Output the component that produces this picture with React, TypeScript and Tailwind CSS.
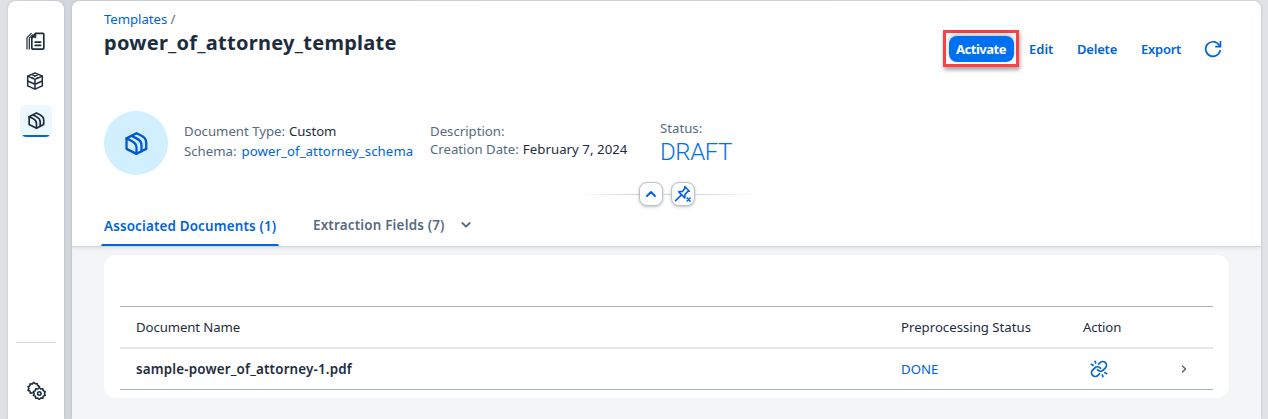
import type { ReactNode, SVGProps } from "react";

function Icon({ children, ...props }: SVGProps<SVGSVGElement> & { children: ReactNode }) {
  return (
    <svg
      width="18"
      height="18"
      viewBox="0 0 18 18"
      fill="none"
      stroke="currentColor"
      strokeWidth="1.5"
      strokeLinecap="round"
      strokeLinejoin="round"
      {...props}
    >
      {children}
    </svg>
  );
}

function DocumentsIcon() {
  return (
    <Icon width="19" height="19" viewBox="0 0 19 19" strokeWidth="1.7">
      <path d="M9.7 1.3h7.2a.9.9 0 0 1 .9.9v14a.9.9 0 0 1-.9.9H6.700a.9.9 0 0 1-.9-.9V5.500z" />
      <path d="M9.9 1.300v4.300H5.800z" fill="currentColor" strokeWidth="0.7" />
      <path d="M9.200 10.200h5.400M9.200 13.300h5.400" />
      <path d="M1 17.500V5.700l4.600-4.600M3.300 17.500V6.200l3.800-3.900" strokeWidth="1.2" strokeLinecap="butt" />
    </Icon>
  );
}

function CubeIcon() {
  return (
    <Icon strokeWidth="1.5">
      <path d="M9 .9l7.3 3.2v9.8L9 17.1l-7.3-3.2V4.1z" />
      <path d="M1.7 4.1L9 7.4l7.3-3.3M9 7.4v9.7M1.7 9L9 12.3 16.3 9" />
      <path d="M5.3 2.6L12.7 5.8M12.7 2.6L5.3 5.8" strokeWidth="1.1" />
    </Icon>
  );
}

function PackageIcon({ size = 18 }: { size?: number }) {
  return (
    <Icon width={size} height={size} strokeWidth="1.8">
      <path d="M1.2 5L9 1l3.600 1.800c2.600 1.300 4 3 4 5.400v5L9 17.100l-7.800-3.900z" />
      <path d="M1.200 5l4 2C7.700 8.300 9 9.800 9 12.200v4.900" />
      <path d="M5 3l4 2c2.600 1.300 3.900 2.900 3.900 5.300v4.800" />
    </Icon>
  );
}

function GearsIcon() {
  return (
    <Icon width="19" height="19" viewBox="0 0 19 19" strokeWidth="1.6">
      <path d="M5.200 11.900l-1.900.3-.3-1.900L1 9.200l1-1.700-1-1.900 1.900-.9.300-1.900 2.100.3L6.700 1.300l1.500 1.500 2-.2.400 1.900 1.800 1" />
      <path d="M12.300 6.500l1.500 1.500 2-.3.500 2 1.900.9-.8 1.900.8 1.900-1.900.9-.5 2-2-.3-1.500 1.500-1.500-1.500-2 .3-.5-2-1.900-.9.800-1.900-.8-1.900 1.900-.9.500-2 2 .3z" />
      <circle cx="12.300" cy="12.500" r="1.700" />
    </Icon>
  );
}

function RefreshIcon() {
  return (
    <Icon className="-ml-px" strokeWidth="1.7" strokeLinecap="butt" strokeLinejoin="miter">
      <path d="M16.200 10.200A7.300 7.300 0 1 1 15.200 5.200l1 1.400" />
      <path d="M16.500 1v5.700h-5.300" />
    </Icon>
  );
}

function UnlinkIcon() {
  return (
    <Icon viewBox="0 0 24 24" strokeWidth="2.3">
      <path d="M10 13a5 5 0 0 0 7.540.540l3-3a5 5 0 0 0-7.070-7.070l-2.200 2.200" />
      <path d="M14 11a5 5 0 0 0-7.540-.540l-3 3a5 5 0 0 0 7.070 7.070l2.200-2.200" />
      <path d="M6.800 1.800l.7 2M1.800 5.800l2.300 1.300M17.200 22.200l-.7-2M22.200 18.200l-2.300-1.300" />
    </Icon>
  );
}

function UnpinIcon() {
  return (
    <Icon strokeWidth="1.6">
      <path d="M10.700 1.500l4.700 4.700-1.700.3-2.600 2.900-.3 3.500-6.200-6 3.800-.5 2.400-3z" />
      <path d="M7.300 10.200L1.600 15.700" />
      <path d="M13.100 13l3 3M16.100 13l-3 3" />
    </Icon>
  );
}

function Sidebar() {
  return (
    <aside className="mt-px flex h-[418px] w-14 shrink-0 flex-col items-center rounded-t-lg bg-white text-[#1d2d3e] shadow-[0_0_3px_rgba(34,53,72,0.18)]">
      <nav className="flex flex-col items-center gap-2 pt-6">
        <div className="flex h-8 w-8 items-center justify-center pr-px"><DocumentsIcon /></div>
        <div className="flex h-8 w-8 items-center justify-center pr-0.5"><CubeIcon /></div>
        <div className="flex h-8 w-8 flex-col items-center overflow-hidden rounded-md bg-[#ebf8ff]">
          <div className="flex h-[30px] items-center pt-px"><PackageIcon size={17} /></div>
          <div className="h-0.5 w-7 rounded-t bg-[#0064d9]" />
        </div>
      </nav>
      <div className="mt-auto h-px w-10 bg-[#d2d4d6]" />
      <div className="flex h-[76px] items-center pt-[18px]"><GearsIcon /></div>
    </aside>
  );
}

function Toolbar() {
  return (
    <div className="mt-[29px] flex h-[37px] items-center text-[13px] leading-5 font-semibold text-[#0064d9]">
      <div className="flex h-[37px] w-[76px] items-center justify-center border-[3px] border-[#fa4146] bg-white shadow-[1px_3px_4px_rgba(0,0,0,0.35)]">
        <button className="flex h-[26px] w-[65px] items-center justify-center rounded-lg bg-[#0070f2] font-bold tracking-[-0.48px] text-white shadow-[0_-2px_4px_rgba(0,0,0,0.25)]">
          Activate
        </button>
      </div>
      <button className="ml-[10px] w-12 text-left">Edit</button>
      <button className="w-16 text-left tracking-[-0.2px]">Delete</button>
      <button className="w-16 text-left tracking-[-0.25px]">Export</button>
      <RefreshIcon />
    </div>
  );
}

function Field({ label, children }: { label: string; children?: ReactNode }) {
  return (
    <div className="flex gap-1 whitespace-nowrap">
      <span className="text-[#556b82]">{label}</span>
      {children}
    </div>
  );
}

function Summary() {
  return (
    <section className="flex h-16 text-[13.2px] leading-5 text-[#1d2d3e]">
      <div className="flex h-16 w-16 items-center justify-center rounded-full bg-[#d1efff] text-[#0057d2]">
        <PackageIcon size={23} />
      </div>
      <div className="ml-4 w-[246px] pt-2.5">
        <Field label="Document Type:"><span className="tracking-[-0.1px]">Custom</span></Field>
        <Field label="Schema:"><a className="pl-px tracking-[0.1px] text-[#0064d9]">power_of_attorney_schema</a></Field>
      </div>
      <div className="w-[230px] pt-[11px] leading-[18px]">
        <Field label="Description:" />
        <Field label="Creation Date:"><span className="tracking-[0.06px]">February 7, 2024</span></Field>
      </div>
      <div className="pt-[9px] leading-4">
        <Field label="Status:" />
        <div className="font-['Roboto',sans-serif] text-2xl leading-8 font-light tracking-[-0.4px] text-[#0070f2]">DRAFT</div>
      </div>
    </section>
  );
}

function HeaderControls() {
  const button =
    "flex h-6 w-6 items-center justify-center rounded-lg border border-[#bcc3ca] bg-white text-[#0064d9] shadow-[0_1px_3px_rgba(34,53,72,0.3)]";
  return (
    <div className="mt-[7px] flex h-6 items-center justify-center">
      <div className="h-px w-[60px] bg-linear-to-r from-transparent to-[#d0d3d6]" />
      <button className={button}>
        <Icon width="12" height="12" viewBox="0 0 12 12" strokeWidth="1.9"><path d="M2 8l4-4 4 4" /></Icon>
      </button>
      <div className="h-px w-2 bg-[#d0d3d6]" />
      <button className={button}><UnpinIcon /></button>
      <div className="h-px w-[60px] bg-linear-to-l from-transparent to-[#d0d3d6]" />
    </div>
  );
}

function Tabs() {
  return (
    <div className="flex h-10 text-[13.4px] font-semibold">
      <div className="-ml-[3px] flex h-10 w-[178px] flex-col text-[#0064d9]">
        <span className="grow pt-[10px] pl-[3px] leading-5 whitespace-nowrap tracking-[0.16px]">Associated Documents (1)</span>
        <div className="h-0.5 rounded-t bg-[#0064d9]" />
      </div>
      <span className="ml-[34px] w-[132px] pt-[9px] leading-5 tracking-[0.2px] whitespace-nowrap text-[#556b82]">Extraction Fields (7)</span>
      <Icon className="mt-[13px] ml-[15px] text-[#556b82]" width="12" height="12" viewBox="0 0 12 12" strokeWidth="1.8">
        <path d="M2.3 4l3.700 3.700L9.700 4" />
      </Icon>
    </div>
  );
}

function DocumentsTable() {
  const row = "grid grid-cols-[765px_181px_85px_1fr] items-center pl-4";
  return (
    <section className="mx-8 mt-2 h-[143px] w-[1125px] rounded-xl bg-white px-4 pt-[51px] text-[13.2px] text-[#1d2d3e]">
      <div className={`${row} h-[43px] border-t border-b-2 border-t-[#a8b2bd] border-b-[#e5e5e5] pt-[2px]`}>
        <span className="tracking-[-0.1px]">Document Name</span>
        <span>Preprocessing Status</span>
        <span className="pl-px tracking-[-0.15px]">Action</span>
      </div>
      <div className={`${row} h-[41px] border-b border-[#a8b2bd]`}>
        <span className="text-[13.4px] font-semibold tracking-[0.17px]">sample-power_of_attorney-1.pdf</span>
        <span className="pt-[2px] text-[#0064d9]">DONE</span>
        <span className="pl-2 text-[#0064d9]"><UnlinkIcon /></span>
        <Icon className="ml-[11px] text-[#556b82]" width="11" height="11" viewBox="0 0 11 11" strokeWidth="1.6">
          <path d="M4.500 2l3 3-3 3" />
        </Icon>
      </div>
    </section>
  );
}

export default function App() {
  return (
    <div className="flex h-[419px] w-[1268px] overflow-hidden bg-linear-to-r from-[#dfe3e6] from-0% via-[#d2d7dd] via-5% to-[#dfe2e6] pl-2 font-['Noto_Sans',sans-serif]">
      <Sidebar />
      <main className="mt-px ml-2 h-[418px] w-[1189px] overflow-hidden rounded-t-lg bg-[#f4f5f7] shadow-[0_0_3px_rgba(34,53,72,0.18)]">
        <header className="h-[246px] border-b border-[#d5d8da] bg-white pl-8 shadow-[0_1px_4px_rgba(34,53,72,0.12)]">
          <div className="flex h-[110px] justify-between pr-[39px]">
            <div className="pt-[8px]">
              <div className="text-[13.2px] leading-5 text-[#556b82]">
                <a className="tracking-[-0.05px] text-[#0064d9]">Templates</a> /
              </div>
              <h1 className="mt-px text-xl leading-[26px] font-bold tracking-[0.27px] text-[#1d2d3e]">power_of_attorney_template</h1>
            </div>
            <Toolbar />
          </div>
          <Summary />
          <div className="-ml-8"><HeaderControls /></div>
          <Tabs />
        </header>
        <DocumentsTable />
      </main>
    </div>
  );
}
